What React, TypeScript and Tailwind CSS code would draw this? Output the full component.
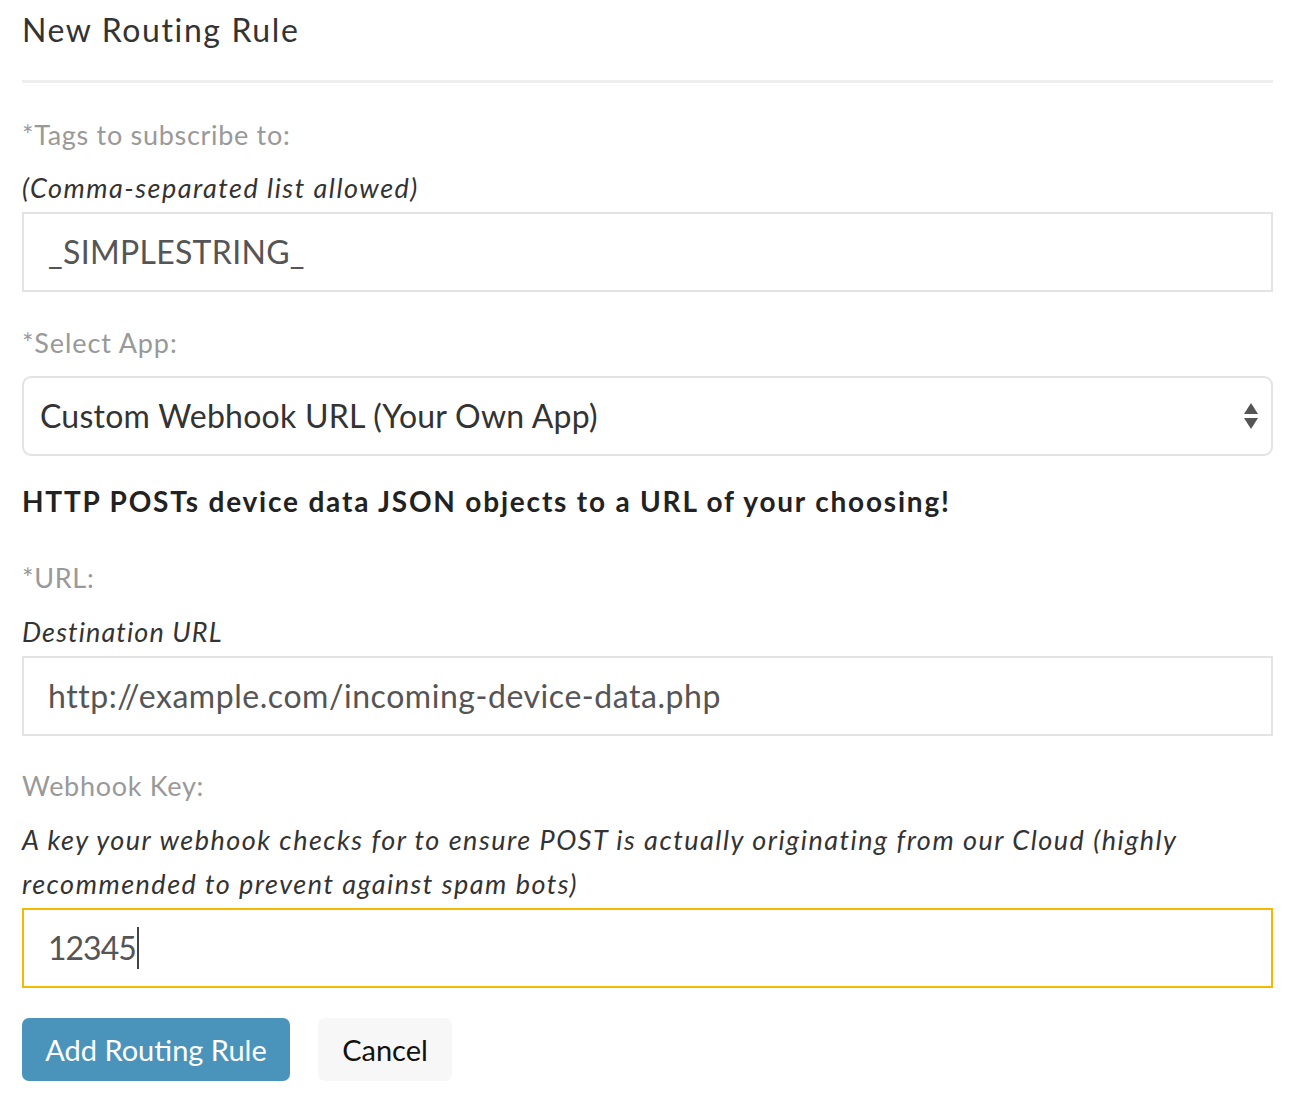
export default function App() {
  const font = { fontFamily: "Lato, 'Noto Sans', sans-serif" };
  return (
    <div className="w-[1302px] min-h-[1114px] bg-white px-[22px] pt-2 text-[#333]" style={font}>
      <h2 className="text-[32px] leading-[44px] tracking-[1.6px] text-[#333]">New Routing Rule</h2>
      <div className="mt-[28px] h-[3px] w-[1251px] bg-[#eeeeee]" />

      {/* tags */}
      <p className="mt-[30px] text-[27px] leading-[44px] tracking-[0.7px] text-[#999]">*Tags to subscribe to:</p>
      <p className="mt-[9px] text-[27px] italic leading-[44px] tracking-[1.5px] text-[#333]">(Comma-separated list allowed)</p>
      <div className="mt-[2px] flex h-[80px] w-[1251px] items-center border-2 border-[#e3e3e3] pl-6 text-[32px] tracking-[0.3px] text-[#555]">
        _SIMPLESTRING_
      </div>

      {/* app select */}
      <p className="mt-[29px] text-[27px] leading-[44px] tracking-[0.9px] text-[#999]">*Select App:</p>
      <div className="mt-[11px] flex h-[80px] w-[1251px] items-center justify-between rounded-[9px] border-2 border-[#e3e3e3] pl-4 pr-[12px] text-[32px] tracking-[0.25px] text-[#333]">
        <span>Custom Webhook URL (Your Own App)</span>
        <svg width="16" height="32" viewBox="0 0 16 32" className="fill-[#555]">
          <polygon points="8,3 15,14 1,14" />
          <polygon points="1,18 15,18 8,29" />
        </svg>
      </div>

      <p className="mt-[23px] text-[28px] font-bold leading-[44px] tracking-[1.8px] text-[#222]">
        HTTP POSTs device data JSON objects to a URL of your choosing!
      </p>

      {/* url */}
      <p className="mt-[33px] text-[27px] leading-[44px] tracking-[0.7px] text-[#999]">*URL:</p>
      <p className="mt-[10px] text-[27px] italic leading-[44px] tracking-[1.1px] text-[#333]">Destination URL</p>
      <div className="mt-[2px] flex h-[80px] w-[1251px] items-center border-2 border-[#e3e3e3] pl-6 text-[32px] tracking-[0.55px] text-[#555]">
        http://example.com/incoming-device-data.php
      </div>

      {/* webhook key */}
      <p className="mt-[28px] text-[27px] leading-[44px] tracking-[0.7px] text-[#999]">Webhook Key:</p>
      <p className="mt-[10px] w-[1251px] text-[27px] italic leading-[44px] tracking-[1.5px] text-[#333]">
        A key your webhook checks for to ensure POST is actually originating from our Cloud (highly
        <br />
        recommended to prevent against spam bots)
      </p>
      <div className="mt-[2px] flex h-[80px] w-[1251px] items-center border-2 border-[#f5b800] pl-6 text-[32px] text-[#555]">
        <span className="tracking-[-1px]">12345</span>
        <span className="ml-[1px] h-[42px] w-[2px] bg-[#444]" />
      </div>

      <div className="mt-[30px] flex gap-[28px]">
        <button className="h-[63px] w-[268px] rounded-[7px] bg-[#4a94bc] text-[29px] text-white">Add Routing Rule</button>
        <button className="h-[63px] w-[134px] rounded-[7px] bg-[#f7f7f7] text-[29px] text-[#111]">Cancel</button>
      </div>
    </div>
  );
}
